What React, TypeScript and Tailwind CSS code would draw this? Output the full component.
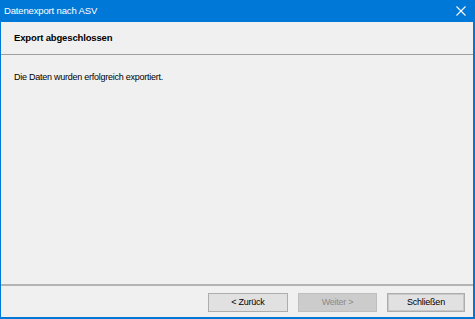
export default function App() {
  return (
    <div
      className="flex h-[319px] w-[475px] flex-col bg-[#0078d7] pb-[2px] pl-px pr-[2px] text-[9px] tracking-[-0.25px] text-black"
      style={{ fontFamily: '"Liberation Sans", Arial, sans-serif' }}
    >
      <div className="flex h-[22px] shrink-0 items-center justify-between pl-[3px] pr-[7px] text-[9.5px] tracking-[-0.15px] text-white">
        <span>Datenexport nach ASV</span>
        <svg width="10" height="10" viewBox="0 0 10 10" aria-hidden>
          <path d="M0.5 0.5 L9.5 9.5 M9.5 0.5 L0.5 9.5" stroke="white" strokeWidth="1.1" />
        </svg>
      </div>
      <div className="flex min-h-0 flex-1 flex-col bg-[#f0f0f0]">
        <div className="flex h-[33px] shrink-0 items-center border-b border-[#a0a0a0] pl-[13px] text-[9.5px] font-bold tracking-[-0.15px]">
          Export abgeschlossen
        </div>
        <div className="flex-1 pl-[13px] pt-[16px]">Die Daten wurden erfolgreich exportiert.</div>
        <div className="flex h-[33px] shrink-0 items-start justify-end gap-[10px] border-t-2 border-[#b4b4b4] pr-[8px] pt-[7px]">
          <button className="h-[19px] w-[80px] border border-[#adadad] bg-[#e1e1e1]">
            &lt; Zurück
          </button>
          <button className="h-[19px] w-[79px] border border-[#bfbfbf] bg-[#cccccc] text-[#8a8a8a]">
            Weiter &gt;
          </button>
          <button className="h-[19px] w-[78px] border border-[#adadad] bg-[#e1e1e1] outline outline-1 -outline-offset-2 outline-[#c8c8c8]">
            Schließen
          </button>
        </div>
      </div>
    </div>
  );
}
